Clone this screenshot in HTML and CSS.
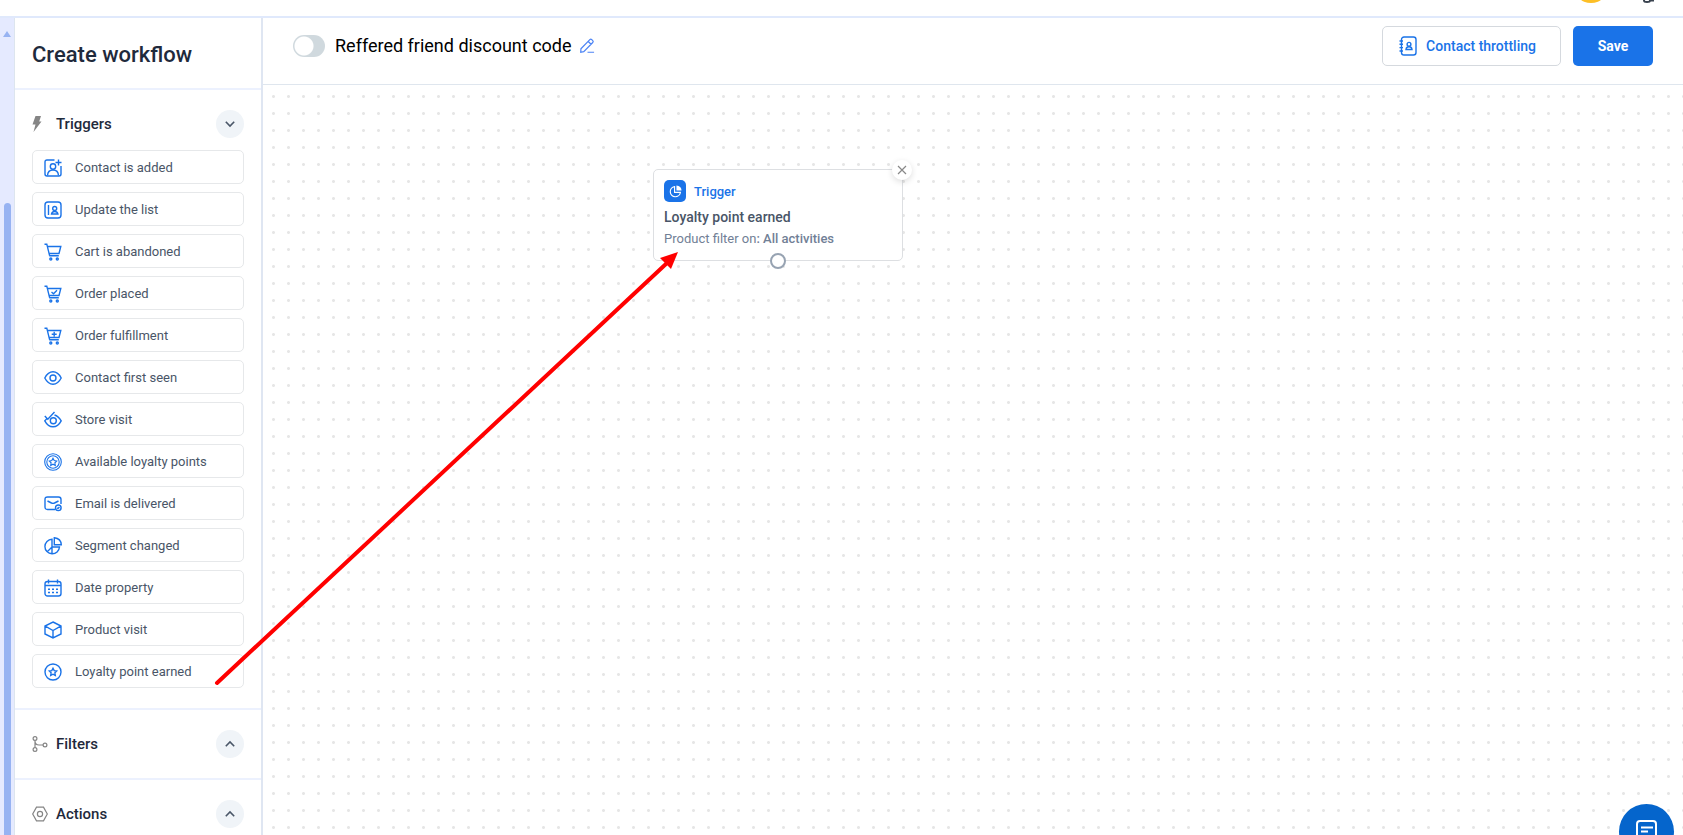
FILE: index.html
```html
<!DOCTYPE html>
<html lang="en">
<head>
<meta charset="utf-8">
<title>Create workflow</title>
<link rel="stylesheet" href="styles.css">
</head>
<body>
<svg class="symbols" aria-hidden="true">
  <symbol id="cart" viewBox="0 0 18 18"><path d="M.5 1.200h2.300l2.800 11.500M3.600 3.500h13.200l-1.800 7H5.300M5.200 12.800h9.600"/><circle cx="6.800" cy="16" r="1"/><circle cx="13.300" cy="16" r="1"/></symbol>
  <symbol id="star" viewBox="0 0 18 18"><path d="M9 5.300l1.200 2.300 2.500.4-1.800 1.800.4 2.600L9 11.200l-2.300 1.200.4-2.600L5.300 8l2.500-.4z"/></symbol>
</svg>
<div class="app">
  <header class="topbar">
    <span class="avatar"></span>
    <svg class="top-icon" viewBox="0 0 16 16"><path d="M5 12v1.500q0 1.500 3 1.500t3-1.500V12M10 13.500h5"/></svg>
  </header>
  <div class="workspace">
    <div class="scrollbar"><span class="scroll-up"></span><span class="scroll-thumb"></span></div>
    <aside class="sidebar">
      <h1 class="sidebar-title">Create workflow</h1>
      <section class="group">
        <div class="group-head">
          <svg class="group-icon bolt" viewBox="0 0 16 16"><path d="M3.500 0H9L7.200 5.500H9.500L1.500 16l2-7.500H.5z"/></svg>
          <h2>Triggers</h2>
          <button class="round" aria-label="Collapse triggers"><svg viewBox="0 0 10 6"><path d="M.8.800 5 5 9.200.8"/></svg></button>
        </div>
        <ul class="items">
          <li><button class="item"><svg class="icon" viewBox="0 0 18 18"><path d="M10.500 1H3Q1 1 1 3v12q0 2 2 2h12q2 0 2-2V7M14.500.5v6M11.500 3.500h6"/><circle cx="9" cy="7.500" r="2.700"/><path d="M3.500 16.500c.2-3.700 2.300-5.500 5.500-5.500s5.300 1.800 5.500 5.500"/></svg>Contact is added</button></li>
          <li><button class="item"><svg class="icon" viewBox="0 0 18 18"><rect x="1" y="1" width="16" height="16" rx="3"/><path d="M4.500 4v10M7.500 13c.3-1.500 1.500-2.500 3.200-2.500s2.900 1 3.200 2.500z"/><circle cx="10.700" cy="7.500" r="2"/></svg>Update the list</button></li>
          <li><button class="item"><svg class="icon" viewBox="0 0 18 18"><use href="#cart"/></svg>Cart is abandoned</button></li>
          <li><button class="item"><svg class="icon" viewBox="0 0 18 18"><use href="#cart"/><path d="M7.500 7l2 1.700L13 5.200"/></svg>Order placed</button></li>
          <li><button class="item"><svg class="icon" viewBox="0 0 18 18"><use href="#cart"/><path d="M10.200 4.700v5M7.700 7.200h5"/></svg>Order fulfillment</button></li>
          <li><button class="item"><svg class="icon" viewBox="0 0 18 18"><path d="M.8 9Q4 2.800 9 2.800T17.200 9Q14 15.200 9 15.200T.8 9z"/><circle cx="9" cy="9" r="3"/></svg>Contact first seen</button></li>
          <li><button class="item"><svg class="icon" viewBox="0 0 18 18"><path d="M3 7.500L.8 9.800Q4 15.800 9 15.800T17.200 9.800Q14.500 5.200 10.500 4M.8 5l3 3.200L10.500 1"/><circle cx="9.300" cy="9.800" r="3"/></svg>Store visit</button></li>
          <li><button class="item"><svg class="icon thin" viewBox="0 0 18 18"><circle cx="9" cy="9" r="8.300"/><circle cx="9" cy="9" r="6.200"/><use href="#star"/></svg>Available loyalty points</button></li>
          <li><button class="item"><svg class="icon" viewBox="0 0 18 18"><path d="M11 14.500H3.500Q1 14.500 1 12V4.500Q1 2 3.500 2h11Q17 2 17 4.500V9M3.500 6l4 2q1.500.7 3 0l4-2"/><circle cx="14.300" cy="12.800" r="2.800"/><path d="M13.200 12.800l.8.800 1.400-1.500"/></svg>Email is delivered</button></li>
          <li><button class="item"><svg class="icon" viewBox="0 0 18 18"><path d="M8 2.200A7.300 7.300 0 1 0 15.500 10H8zM10.300.7v7h7Q17 1.500 10.300.7zM8 10v7.200M8 10l-5 5"/></svg>Segment changed</button></li>
          <li><button class="item"><svg class="icon" viewBox="0 0 18 18"><rect x="1" y="2.500" width="16" height="14.500" rx="2.500"/><path d="M1 6.500h16M4.500.5v4M13.500.5v4"/><path stroke-dasharray="2 2" d="M4 10.200h10M4 13.500h10"/></svg>Date property</button></li>
          <li><button class="item"><svg class="icon" viewBox="0 0 18 18"><path d="M9 1l8 4v8l-8 4-8-4V5zM1.300 5.200L9 9.500l7.700-4.300M9 9.500V17"/></svg>Product visit</button></li>
          <li><button class="item"><svg class="icon" viewBox="0 0 18 18"><circle cx="9" cy="9" r="8"/><use href="#star"/></svg>Loyalty point earned</button></li>
        </ul>
      </section>
      <section class="group">
        <div class="group-head">
          <svg class="group-icon" viewBox="0 0 16 16"><circle cx="3" cy="2.500" r="1.900"/><circle cx="3" cy="13.500" r="1.900"/><circle cx="13" cy="9" r="1.900"/><path d="M3 4.400v7.200M3 5q0 4 4 4h4"/></svg>
          <h2>Filters</h2>
          <button class="round" aria-label="Expand filters"><svg viewBox="0 0 10 6"><path d="M.8 5.200 5 1l4.200 4.200"/></svg></button>
        </div>
      </section>
      <section class="group">
        <div class="group-head">
          <svg class="group-icon" viewBox="0 0 16 16"><path d="M4.500 1.200h7L15.300 8l-3.800 6.800h-7L.7 8z"/><circle cx="8" cy="8" r="2.600"/></svg>
          <h2>Actions</h2>
          <button class="round" aria-label="Expand actions"><svg viewBox="0 0 10 6"><path d="M.8 5.200 5 1l4.200 4.200"/></svg></button>
        </div>
      </section>
    </aside>
    <main class="editor">
      <div class="editor-head">
        <input class="toggle" type="checkbox" role="switch" aria-label="Enable workflow">
        <span class="name">Reffered friend discount code</span>
        <button class="edit" aria-label="Rename"><svg viewBox="0 0 16 16"><path d="M1 11.500L10.500 1.800Q11.500.8 12.600 1.800l1 1q1 1 0 2L4 14.500l-3.200.7zM8.800 3.700l3 3M8 15.200h7"/></svg></button>
        <div class="actions">
          <button class="btn outline"><svg class="book" viewBox="0 0 18 20"><rect x="2.500" y="1" width="14.500" height="18" rx="2.500"/><path d="M.5 5h3.500M.5 8.300h3.500M.5 11.600h3.500M.5 15h3.500M7 13.500q.3-2.700 3-2.700t3 2.700z"/><circle cx="10" cy="8.300" r="1.900"/></svg>Contact throttling</button>
          <button class="btn primary">Save</button>
        </div>
      </div>
      <div class="canvas">
        <article class="node">
          <div class="node-head"><span class="node-icon"><svg viewBox="0 0 14 14"><path d="M6 1.700A5.500 5.500 0 1 0 12.300 8H6z"/><path class="solid" d="M8 .5v5.500h5.500Q13.300 1.200 8 .5z"/></svg></span>Trigger</div>
          <h3>Loyalty point earned</h3>
          <p>Product filter on<b>: All activities</b></p>
          <button class="close" aria-label="Remove"><svg viewBox="0 0 10 10"><path d="M1 1l8 8M9 1L1 9"/></svg></button>
          <span class="port"></span>
        </article>
      </div>
    </main>
  </div>
  <svg class="arrow" viewBox="0 0 470 440"><path class="shaft" d="M6 431L456 11"/><path class="tip" d="M467 0l-7 17-11-11z"/></svg>
  <button class="chat" aria-label="Open chat"><svg viewBox="0 0 24 26"><rect x="2" y="2" width="19" height="21" rx="3"/><path d="M6 8.500h12M6 12.500h7"/></svg></button>
</div>
</body>
</html>
```
FILE: styles.css
```css
* { box-sizing: border-box; }
body { margin: 0; font-family: Roboto, sans-serif; color: #1f2a3c; background: #fff; }
button { font: inherit; color: inherit; border: 0; background: none; padding: 0; cursor: pointer; }
h1, h2, h3, p, ul { margin: 0; padding: 0; }
svg { display: block; fill: none; stroke: currentColor; overflow: visible; }
.symbols { position: absolute; width: 0; height: 0; }
.app { position: relative; display: flex; flex-direction: column; height: 100vh; overflow: hidden; }
.topbar { flex: none; display: flex; align-items: flex-end; justify-content: flex-end; gap: 30px; height: 18px; padding: 0 28px 13px 0; border-bottom: 2px solid #e0e9fc; overflow: hidden; }
.avatar { flex: none; width: 36px; height: 36px; border-radius: 50%; background: #fdbf26; }
.top-icon { flex: none; width: 16px; height: 16px; stroke-width: 2; color: #3a4350; }
.workspace { flex: 1; min-height: 0; display: flex; }
.scrollbar { flex: none; width: 15px; display: flex; flex-direction: column; align-items: center; gap: 166px; padding-top: 13px; background: #e5eaff; border-right: 1px solid #dde5ee; }
.scroll-up { border: 4px solid transparent; border-top: 0; border-bottom: 6px solid #97b3f2; }
.scroll-thumb { flex: 1; width: 7px; border-radius: 4px 4px 0 0; background: #97b3f2; }
.sidebar { flex: none; width: 247px; border-right: 1px solid #dfe6f2; overflow: hidden; }
.sidebar-title { padding: 24px 17px 20px; font-size: 22px; line-height: 26px; font-weight: 500; }
.group { padding: 20px 17px; border-top: 2px solid #ecf1fe; }
.group-head { display: flex; align-items: center; height: 28px; }
.group-icon { width: 16px; height: 16px; margin-right: 8px; color: #858585; stroke-width: 1.2; }
.bolt { fill: #858585; stroke: none; }
.group h2 { flex: 1; font-size: 15px; line-height: 20px; font-weight: 500; }
.round { width: 28px; height: 28px; border-radius: 50%; background: #f0f4f8; color: #4a5668; display: grid; place-items: center; }
.round svg { width: 10px; height: 6px; stroke-width: 1.6; }
.items { list-style: none; display: grid; gap: 8px; margin-top: 12px; }
.item { display: flex; align-items: center; gap: 13px; width: 100%; height: 34px; padding: 1px 11px 0; border: 1px solid #e6e8ea; border-radius: 5px; font-size: 13px; line-height: 16px; color: #495567; text-align: left; }
.icon { flex: none; width: 18px; height: 18px; color: #1a73e8; stroke-width: 1.4; }
.thin { stroke-width: 1.1; }
.editor { flex: 1; min-width: 0; display: flex; flex-direction: column; border-left: 1px solid #dfe6f2; }
.editor-head { flex: none; display: flex; align-items: flex-start; height: 67px; padding: 8px 30px 0; border-bottom: 1px solid #dfe6ee; }
.toggle { appearance: none; width: 32px; height: 22px; margin: 9px 10px 0 0; border-radius: 11px; background: radial-gradient(circle at 11px 11px, #fff 9px, #d0d9de 10px); }
.name { margin-top: 8px; font-size: 18px; line-height: 24px; color: #000; }
.edit { margin: 12px 0 0 8px; color: #4d84f5; }
.edit svg { width: 15px; height: 15px; stroke-width: 1.3; }
.actions { margin-left: auto; display: flex; gap: 12px; }
.btn { display: flex; align-items: center; justify-content: center; gap: 9px; height: 40px; border-radius: 5px; font-size: 14px; line-height: 18px; font-weight: 500; }
.outline { padding: 0 24px 0 16px; border: 1px solid #d5d9de; color: #1a73e8; }
.book { width: 18px; height: 20px; stroke-width: 1.4; }
.primary { width: 80px; background: #1a73e8; color: #fff; font-weight: 700; }
.canvas { flex: 1; position: relative; background: radial-gradient(circle at 50% 50%, #e6e6e6 1px, transparent 2px) 3px 3px / 15px 17px; }
.node { position: absolute; left: 390px; top: 84px; width: 250px; padding: 10px 10px 11px; border: 1px solid #dddfe2; border-radius: 5px; background: #fff; }
.node-head { display: flex; align-items: center; gap: 8px; font-size: 13px; font-weight: 500; color: #1a73e8; }
.node-icon { width: 22px; height: 22px; border-radius: 5px; display: grid; place-items: center; background: #1a73e8; color: #fff; }
.node-icon svg { width: 13px; height: 13px; stroke-width: 1.2; }
.solid { fill: #fff; stroke: none; }
.node h3 { margin-top: 5px; font-size: 14px; line-height: 20px; font-weight: 500; color: #495567; }
.node p { margin-top: 2px; font-size: 13px; line-height: 20px; color: #718096; }
.node b { font-weight: 500; }
.close { position: absolute; right: -10px; top: -10px; width: 20px; height: 20px; border-radius: 50%; background: #fff; color: #888; box-shadow: 0 2px 6px #0002; display: grid; place-items: center; }
.close svg { width: 10px; height: 10px; stroke-width: 1.2; }
.port { position: absolute; left: 50%; bottom: -9px; width: 16px; height: 16px; margin-left: -8px; border: 2px solid #97a3b2; border-radius: 50%; background: #fff; }
.arrow { position: absolute; left: 211px; top: 252px; width: 470px; height: 440px; pointer-events: none; color: #f00; }
.shaft { stroke-width: 4; stroke-linecap: round; }
.tip { fill: #f00; stroke: none; }
.chat { position: absolute; right: 9px; bottom: -24px; width: 55px; height: 55px; border-radius: 50%; background: #0565cc; color: #fff; display: flex; justify-content: center; padding-top: 15px; }
.chat svg { width: 24px; height: 26px; stroke-width: 2; }
```
